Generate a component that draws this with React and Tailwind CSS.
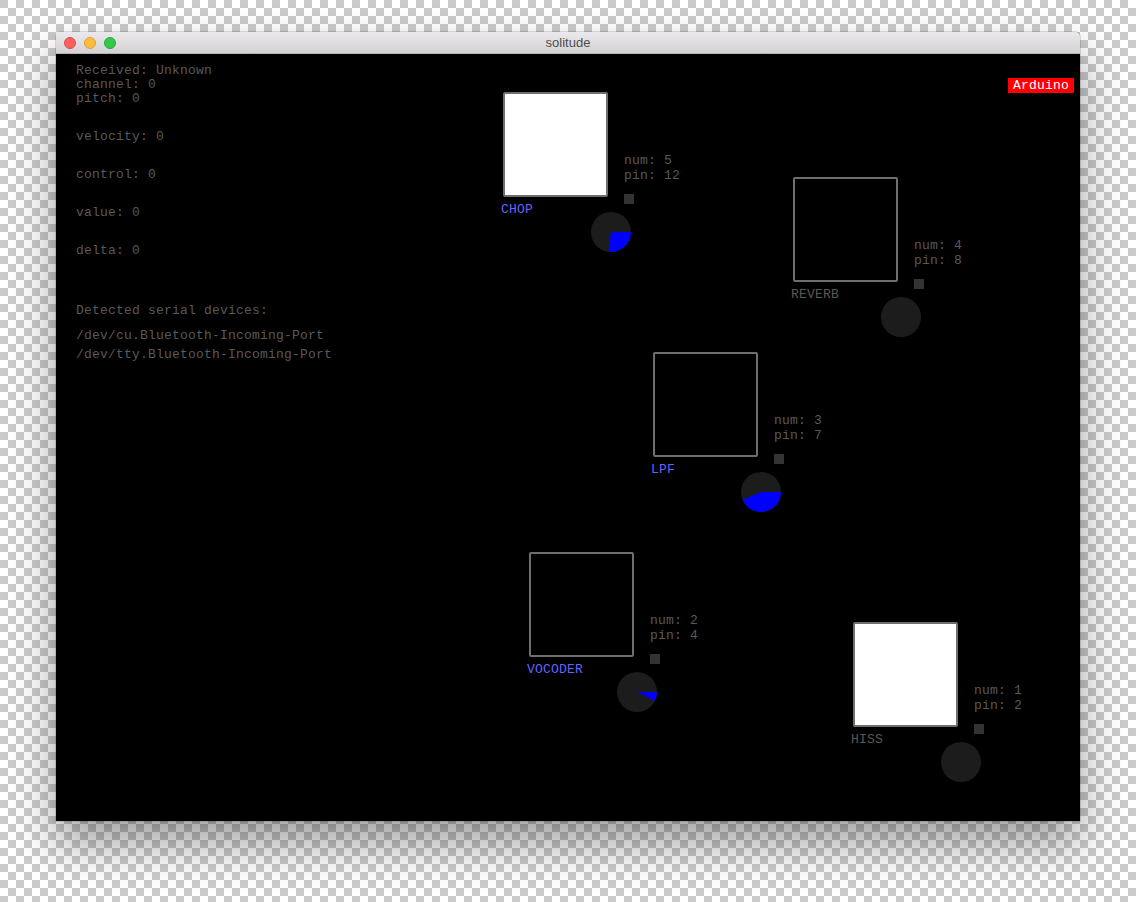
import React from 'react';

const MONO = "font-['Liberation_Mono','DejaVu_Sans_Mono',monospace] text-[13px] tracking-[0.2px] leading-[14px]";

const NODES = [
  { name: 'CHOP', num: 5, pin: 12, pos: 'left-[447px] top-[38px]', lit: true, active: true, angle: 97 },
  { name: 'REVERB', num: 4, pin: 8, pos: 'left-[737px] top-[123px]', lit: false, active: false, angle: 0 },
  { name: 'LPF', num: 3, pin: 7, pos: 'left-[597px] top-[298px]', lit: false, active: true, angle: 157 },
  { name: 'VOCODER', num: 2, pin: 4, pos: 'left-[473px] top-[498px]', lit: false, active: true, angle: 27 },
  { name: 'HISS', num: 1, pin: 2, pos: 'left-[797px] top-[568px]', lit: true, active: false, angle: 0 },
];

function Dial({ angle }) {
  const a = (angle * Math.PI) / 180;
  const x = 20 + 20 * Math.cos(a);
  const y = 20 + 20 * Math.sin(a);
  const large = angle > 180 ? 1 : 0;
  return (
    <svg width="40" height="40" viewBox="0 0 40 40">
      <circle cx="20" cy="20" r="20" fill="#1c1c1c" />
      {angle > 0 && <path d={`M20 20 L40 20 A20 20 0 ${large} 1 ${x} ${y} Z`} fill="#0000ff" />}
    </svg>
  );
}

function Node({ node }) {
  return (
    <div className={`absolute ${node.pos} w-[105px] h-[105px]`}>
      <div className={`w-[105px] h-[105px] border-2 border-[#6e6e6e] rounded-[2px] ${node.lit ? 'bg-white' : 'bg-black'}`} />
      <div className={`absolute left-[-2px] top-[111px] whitespace-nowrap ${MONO} ${node.active ? 'text-[#6464ff]' : 'text-[#595959]'}`}>{node.name}</div>
      <div className={`absolute left-[121px] top-[62px] whitespace-nowrap text-[#595959] ${MONO}`}>
        <div>num: {node.num}</div>
        <div className="mt-[1px]">pin: {node.pin}</div>
      </div>
      <div className="absolute left-[121px] top-[102px] w-[10px] h-[10px] bg-[#333333]" />
      <div className="absolute left-[88px] top-[120px]">
        <Dial angle={node.angle} />
      </div>
    </div>
  );
}

export default function App() {
  return (
    <div className="w-[1136px] h-[902px] overflow-hidden pl-[56px] pt-[32px] bg-[conic-gradient(#ffffff_25%,#cbcbcb_0_50%,#ffffff_0_75%,#cbcbcb_0)] bg-[length:16px_16px]">
      <div className="w-[1024px] rounded-t-[5px] shadow-[0_22px_45px_rgba(0,0,0,0.38),0_0_0_1px_rgba(0,0,0,0.12)]">
        {/* Title bar */}
        <div className="relative h-[22px] rounded-t-[5px] bg-gradient-to-b from-[#ebe9eb] to-[#d4d2d4] border-b border-[#b5b3b5] flex items-center justify-center">
          <div className="absolute left-[8px] top-[5px] flex gap-[8px]">
            <div className="w-[12px] h-[12px] rounded-full bg-[#fc605c] border border-[#de4a45]" />
            <div className="w-[12px] h-[12px] rounded-full bg-[#fdbc40] border border-[#dea236]" />
            <div className="w-[12px] h-[12px] rounded-full bg-[#34c84a] border border-[#27aa35]" />
          </div>
          <span className="font-['Liberation_Sans',Arial,sans-serif] text-[13px] text-[#4d4d4d] leading-none">solitude</span>
        </div>

        {/* Sketch canvas */}
        <div className="relative h-[767px] bg-black">
          <div className={`pl-[20px] pt-[10px] text-[#595959] ${MONO}`}>
            <div>Received: Unknown</div>
            <div>channel: 0</div>
            <div>pitch: 0</div>
            <div className="mt-[24px]">velocity: 0</div>
            <div className="mt-[24px]">control: 0</div>
            <div className="mt-[24px]">value: 0</div>
            <div className="mt-[24px]">delta: 0</div>
            <div className="mt-[46px]">Detected serial devices:</div>
            <div className="mt-[11px]">/dev/cu.Bluetooth-Incoming-Port</div>
            <div className="mt-[5px]">/dev/tty.Bluetooth-Incoming-Port</div>
          </div>

          <div className={`absolute right-[6px] top-[24px] h-[15px] px-[5px] bg-[#ff0000] text-white ${MONO} leading-[16px]`}>Arduino</div>

          {NODES.map(n => (
            <Node key={n.name} node={n} />
          ))}
        </div>
      </div>
    </div>
  );
}
